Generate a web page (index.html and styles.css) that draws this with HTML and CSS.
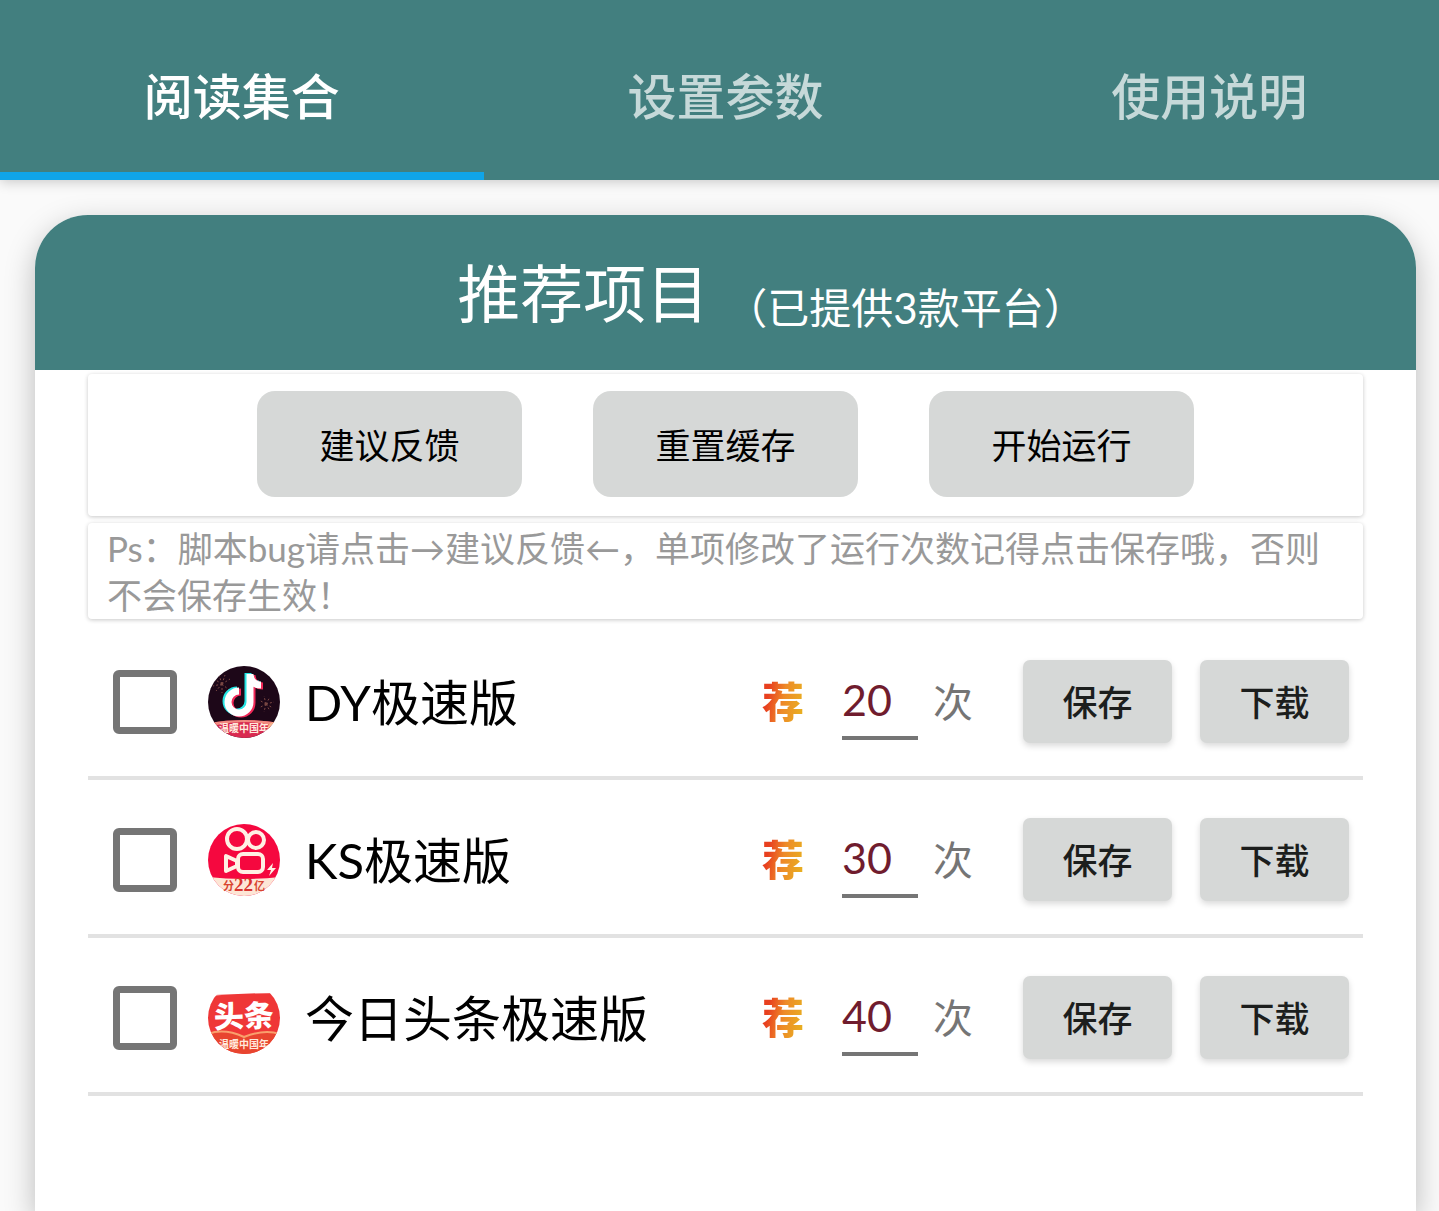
FILE: index.html
```html
<!DOCTYPE html>
<html lang="zh-CN">
<head>
  <meta charset="utf-8">
  <title>阅读集合</title>
  <link rel="stylesheet" href="styles.css">
</head>
<body>
  <div class="app">
    <nav class="tabs">
      <button class="tab active">阅读集合</button>
      <button class="tab">设置参数</button>
      <button class="tab">使用说明</button>
    </nav>

    <main class="card">
      <header class="card-header">
        <h1>推荐项目</h1>
        <span class="subtitle">（已提供3款平台）</span>
      </header>

      <div class="card-body">
        <div class="panel actions">
          <button class="action">建议反馈</button>
          <button class="action">重置缓存</button>
          <button class="action">开始运行</button>
        </div>

        <p class="panel note">Ps：脚本bug请点击→建议反馈←，单项修改了运行次数记得点击保存哦，否则不会保存生效！</p>

        <ul class="list">
          <li class="row">
            <input type="checkbox" class="check" id="dy">
            <svg class="icon" viewBox="0 0 72 72">
              <clipPath id="round"><circle cx="36" cy="36" r="36"/></clipPath>
              <g clip-path="url(#round)">
                <rect width="72" height="72" fill="#1d0718"/>
                <g fill="none" stroke="#7d4a45" stroke-width="1" stroke-dasharray="2 2">
                  <path d="M14 18l-8-5M14 18l-3-9M14 18l3-9M14 18l8-5M14 18l-9 2M14 18l-6 7M14 18v9M14 18l7 6"/>
                  <path d="M58 38l-7-4M58 38l-2-8M58 38l4-7M58 38l8-2M58 38l-7 4M58 38l-2 8M58 38l4 7M58 38l7 4"/>
                </g>
                <g fill="none" stroke-width="7">
                  <path d="M42 7v28a11 11 0 1 1-11-11M42 8c1 7 5 10 11 10" stroke="#25e4e3" transform="translate(-2 0)"/>
                  <path d="M42 7v28a11 11 0 1 1-11-11M42 8c1 7 5 10 11 10" stroke="#f02858" transform="translate(2 2)"/>
                  <path d="M42 7v28a11 11 0 1 1-11-11M42 8c1 7 5 10 11 10" stroke="#fff" transform="translate(0 1)"/>
                </g>
                <path d="M0 57q36-6 72 0v15H0z" fill="#d92a50"/>
                <path d="M0 57q36-6 72 0l-9 2q-27-6-54 0z" fill="#f08a80"/>
                <path d="M60 60q3-5 12-5v11l-14 6z" fill="#f6b58b"/>
                <text class="icon-caption" x="11" y="66">温暖中国年</text>
              </g>
            </svg>
            <label class="name" for="dy">DY极速版</label>
            <span class="badge">荐</span>
            <input type="text" class="count" value="20" aria-label="次数">
            <span class="unit">次</span>
            <button class="btn">保存</button>
            <button class="btn">下载</button>
          </li>

          <li class="row">
            <input type="checkbox" class="check" id="ks">
            <svg class="icon" viewBox="0 0 72 72">
              <g clip-path="url(#round)">
                <rect width="72" height="72" fill="#f5083f"/>
                <path d="M0 53q36 4 72 0v19H0z" fill="#fde6d6"/>
                <g fill="none" stroke="#fff0e4" stroke-width="4" stroke-linejoin="round">
                  <circle cx="29" cy="15" r="10"/>
                  <circle cx="48" cy="16" r="8"/>
                  <rect x="30" y="30" width="25" height="18" rx="5"/>
                  <path d="M29 37l-11-5v15l11-5z"/>
                </g>
                <path d="M65 39l-6 7h4l-2 6 7-8h-4z" fill="#fff0e4"/>
              </g>
              <text x="15" y="66" class="ks-small">分</text>
              <text x="26" y="67" class="ks-big">22</text>
              <text x="46" y="66" class="ks-small">亿</text>
            </svg>
            <label class="name" for="ks">KS极速版</label>
            <span class="badge">荐</span>
            <input type="text" class="count" value="30" aria-label="次数">
            <span class="unit">次</span>
            <button class="btn">保存</button>
            <button class="btn">下载</button>
          </li>

          <li class="row">
            <input type="checkbox" class="check" id="tt">
            <svg class="icon" viewBox="0 0 72 72">
              <g clip-path="url(#round)">
                <path d="M0 14q36-3 72-3v61H0z" fill="#ef3737"/>
                <path d="M0 52q16-4 36 3q20-6 36-3v20H0z" fill="#e8452f"/>
                <path d="M0 52q16-6 36 3q20-8 36-3" fill="none" stroke="#f9a06c" stroke-width="2"/>
                <text x="6" y="45" class="tt-title" transform="rotate(-2 36 36)">头条</text>
                <text class="icon-caption" x="11" y="66">温暖中国年</text>
              </g>
            </svg>
            <label class="name" for="tt">今日头条极速版</label>
            <span class="badge">荐</span>
            <input type="text" class="count" value="40" aria-label="次数">
            <span class="unit">次</span>
            <button class="btn">保存</button>
            <button class="btn">下载</button>
          </li>
        </ul>
      </div>
    </main>
  </div>
</body>
</html>
```

FILE: styles.css
```css
* {
  box-sizing: border-box;
}

body {
  margin: 0;
  background: #fafafa;
  font-family: Lato, "Noto Sans CJK SC", sans-serif;
  color: #000;
  overflow-x: hidden;
}

button,
input {
  font-family: inherit;
  border: none;
  padding: 0;
}

/* the app runs slightly past the right edge of the window */
.app {
  display: flex;
  flex-direction: column;
  width: calc(100% + 12px);
  min-height: 100vh;
}

.tabs {
  display: flex;
  height: 180px;
  background: #427f7f;
  box-shadow: 0 2px 12px rgba(0, 0, 0, 0.2);
}

.tab {
  flex: 1;
  padding-top: 14px;
  border-bottom: 8px solid transparent;
  background: none;
  color: rgba(255, 255, 255, 0.7);
  font-size: 49px;
  font-weight: 500;
}

.tab.active {
  color: #fff;
  border-bottom-color: #10a5e8;
}

.card {
  flex: 1;
  margin: 35px 35px 0;
  background: #fff;
  border-radius: 53px 53px 0 0;
  box-shadow: 0 10px 30px rgba(0, 0, 0, 0.26);
}

.card-header {
  display: flex;
  justify-content: center;
  align-items: center;
  gap: 16px;
  height: 155px;
  padding-left: 92px;
  background: #427f7f;
  border-radius: 53px 53px 0 0;
  color: #fff;
}

h1 {
  margin: 0;
  padding-bottom: 6px;
  font-size: 63px;
  font-weight: 400;
}

.subtitle {
  padding-top: 26px;
  font-size: 42px;
}

.card-body {
  padding: 4px 53px 0;
}

.panel {
  border-radius: 4px;
  box-shadow: 0 1px 4px rgba(0, 0, 0, 0.22);
}

.actions {
  display: flex;
  justify-content: center;
  gap: 71px;
  padding: 17px 0 19px;
}

.action {
  width: 265px;
  height: 106px;
  padding-bottom: 2px;
  border-radius: 18px;
  background: #d6d8d7;
  font-size: 35px;
}

.note {
  margin: 7px 0 3px;
  padding: 2px 19px 0;
  color: #999;
  font-size: 35px;
  line-height: 47px;
}

.list {
  margin: 0;
  padding: 0;
  list-style: none;
}

.row {
  display: flex;
  align-items: center;
  padding: 38px 14px 33px 25px;
  border-bottom: 4px solid #e2e2e2;
}

.check {
  appearance: none;
  width: 64px;
  height: 64px;
  margin: 0 31px 0 0;
  border: 7px solid #757575;
  border-radius: 6px;
}

.icon {
  width: 72px;
  height: 72px;
  margin-right: 25px;
}

.icon-caption {
  fill: #ffe9dc;
  font-size: 10px;
  font-weight: 700;
}

.ks-small {
  fill: #d8442f;
  font-size: 11px;
  font-weight: 700;
}

.ks-big {
  fill: #d8342f;
  font-family: "Liberation Serif", serif;
  font-size: 19px;
  font-weight: 700;
}

.tt-title {
  fill: #fff;
  font-size: 30px;
  font-weight: 900;
}

.name {
  flex: 1;
  font-size: 49px;
  line-height: 72px;
}

.badge {
  margin-right: 38px;
  background: linear-gradient(100deg, #e8401f 20%, #ee8a28 50%, #e8b020 90%);
  background-clip: text;
  color: transparent;
  font-size: 42px;
  font-weight: 900;
  line-height: 72px;
}

.count {
  width: 76px;
  height: 76px;
  margin-right: 15px;
  border-bottom: 4px solid #757575;
  background: none;
  color: #701c2e;
  font-size: 43px;
}

.unit {
  margin-right: 50px;
  color: #757575;
  font-size: 40px;
  line-height: 72px;
}

.btn {
  width: 149px;
  height: 83px;
  padding-bottom: 2px;
  border-radius: 7px;
  background: #d6d8d7;
  box-shadow: 0 3px 6px rgba(0, 0, 0, 0.15);
  color: #1c1e1d;
  font-size: 35px;
  font-weight: 500;
}

.btn + .btn {
  margin-left: 28px;
}
```
